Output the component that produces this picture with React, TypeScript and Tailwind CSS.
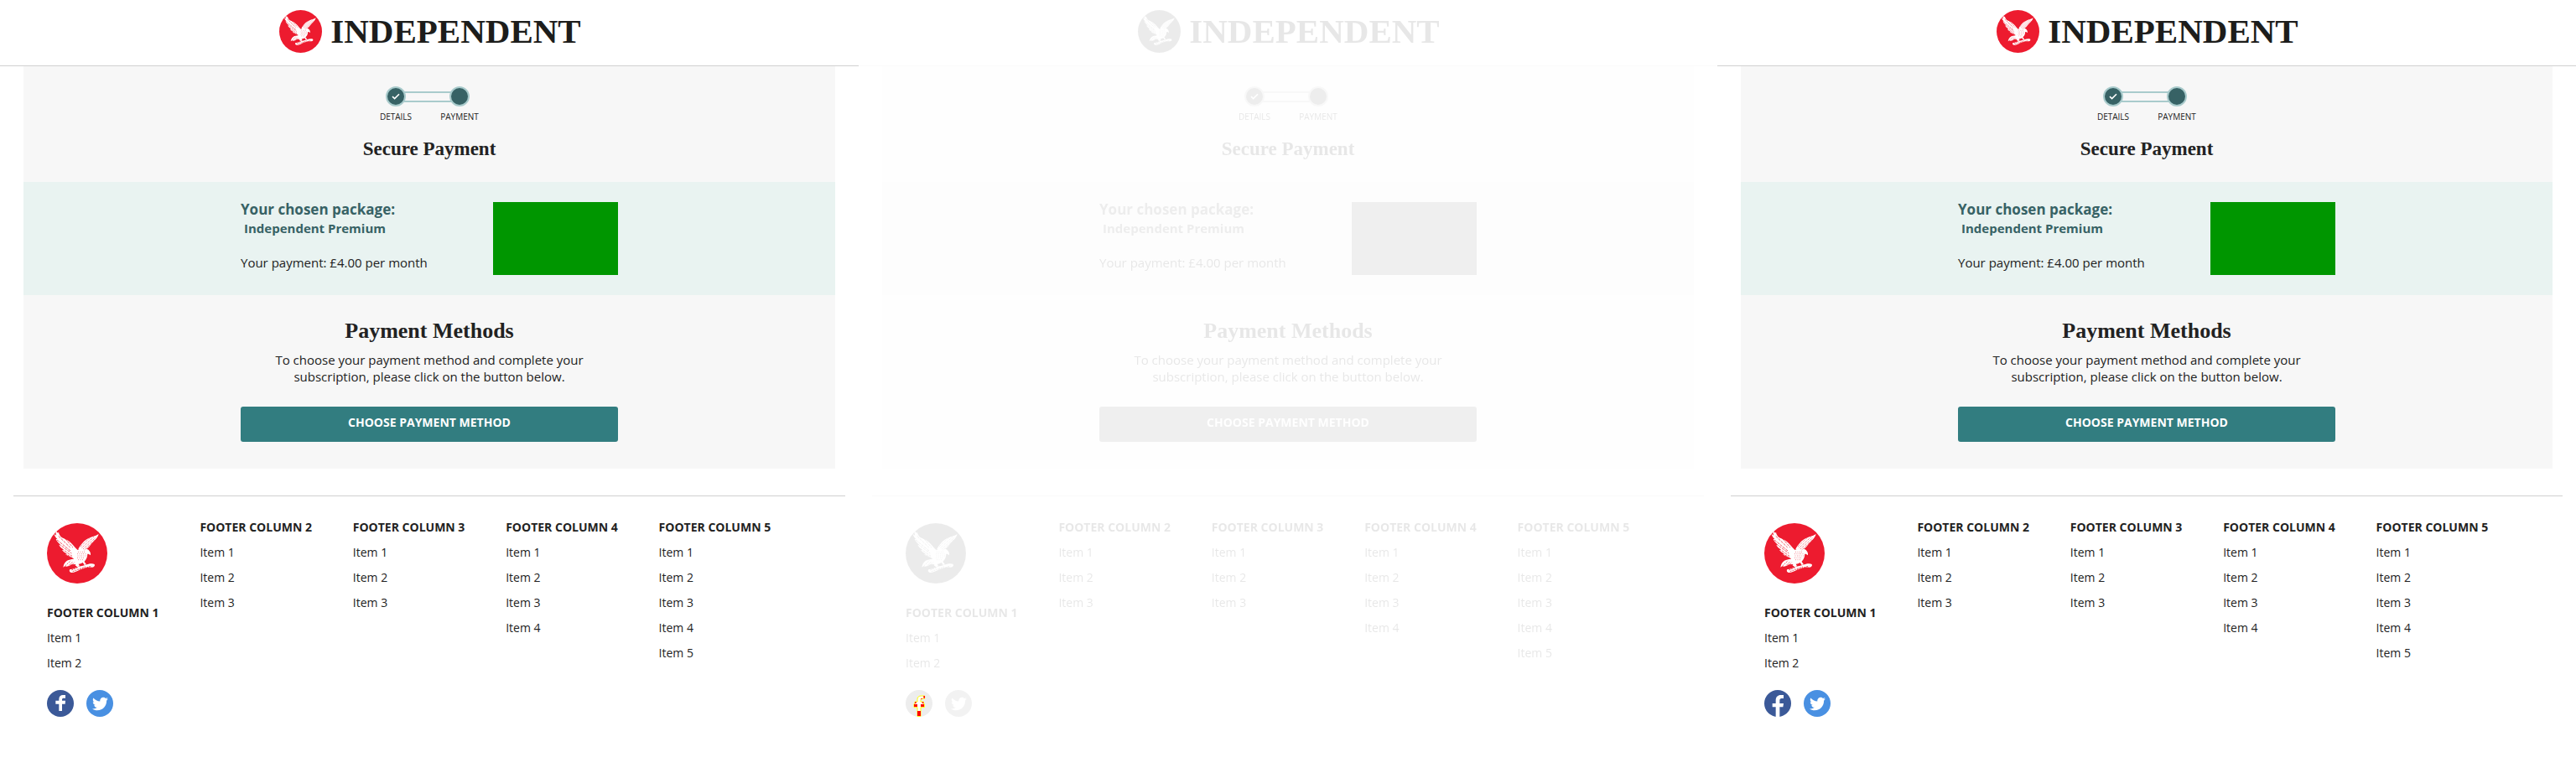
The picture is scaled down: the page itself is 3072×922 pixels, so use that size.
import { FaTwitter } from "react-icons/fa";

type FacebookStyle = "inset" | "compare" | "full";

const FADED = "grayscale opacity-10";

const COLUMNS = [
  { title: "FOOTER COLUMN 2", items: ["Item 1", "Item 2", "Item 3"] },
  { title: "FOOTER COLUMN 3", items: ["Item 1", "Item 2", "Item 3"] },
  { title: "FOOTER COLUMN 4", items: ["Item 1", "Item 2", "Item 3", "Item 4"] },
  { title: "FOOTER COLUMN 5", items: ["Item 1", "Item 2", "Item 3", "Item 4", "Item 5"] },
];

function EagleLogo({ className }: { className: string }) {
  return (
    <svg viewBox="0 0 216 216" className={className} aria-hidden="true">
      <circle cx="108" cy="108" r="108" fill="#ed1b2f" />
      <g fill="#fff">
        <path d="M42 32c1 8 5 14 12 20 14 6 25 11 34 21 9 9 15 19 24 25l-3 33c-9-2-15-6-22-9-7-3-14-6-21-11l5-1c-7-4-13-9-17-14l5-1c-7-6-13-11-16-18l5 0c-8-7-13-13-16-20l5 0c-6-6-10-12-11-18l8 5c-3-6-3-11-2-16l7 7z" />
        <path d="M112 93c4-9 11-18 20-28 10-8 20-13 32-17 8-2 15-5 21-9-2 8-7 15-13 21-6 7-13 13-18 20-6 7-11 12-18 15z" />
        <path d="M104 100c8-7 18-10 29-9 8 0 15 2 19 9 3 4 5 8 4 15-3-3-6-5-11-5 0 13-6 25-18 32-6 3-12 5-18 5l-22 1c-7 7-15 9-23 6l-6 4c2-12 6-19 14-24 7-4 15-5 23-6z" />
        <path d="M109 138l8 16-8 3-8-6zM125 136l9 14 7-2-10-14z" />
        <path d="M83 165c10 1 17-4 27-8 10-3 21-4 33-9 8-3 20-5 27-1 3 5-1 10-8 11-9 0-14-1-22 2-11 3-18 6-26 9-10 4-17 9-27 8-6-2-9-7-4-12z" />
      </g>
      <g stroke="#ed1b2f" strokeWidth="2.2" fill="none">
        <path d="M41 46l42 41M36 60l48 39M42 74l46 34M56 45l37 42M52 91l38 27M63 107l26 16" strokeDasharray="10 3" />
        <path d="M120 84l42-40M125 88l44-40M130 92l44-40M134 96l38-36M117 78l30-28" strokeDasharray="3 3" />
        <path d="M112 103h28M109 110h32M110 117h30M109 124h28M112 131h20" strokeDasharray="2 5" />
        <path d="M65 153l20-19M74 156l18-18M85 155l13-15M92 173l46-17M88 168l22-9M116 167l44-14" strokeDasharray="6 3" />
      </g>
    </svg>
  );
}

function FacebookIcon({ variant }: { variant: FacebookStyle }) {
  if (variant === "compare") {
    return (
      <svg viewBox="0 0 96 96" className="size-8" aria-hidden="true">
        <circle cx="48" cy="48" r="48" fill="#ededed" />
        <path
          d="M42 94V62H30V50h3V42h9V34C42 24 48 21 56 21h12v10h-9c-3 0-5 2-5 6v5h10v8h3v12H54v32z"
          fill="#fff"
          stroke="#ff0"
          strokeWidth="3"
        />
        <path d="M30 51h12v9H30zM54 51h12v9H54zM42 75h12v18H42zM64 21h5v8h-5zM33 43h5v5h-5zM59 43h5v5h-5zM55 30h4v3h-4z" fill="#f00" />
      </svg>
    );
  }
  return (
    <svg viewBox="0 0 96 96" className="size-8" aria-hidden="true">
      <circle cx="48" cy="48" r="48" fill="#3b5998" />
      {variant === "inset" ? (
        <path d="M43 75V50H31V38h12v-5c0-10 6-15 14-15h9v11h-6c-4 0-6 2-6 5v4h12l-1 12H54v25z" fill="#fff" />
      ) : (
        <path d="M41 96V61H29V48h12V37c0-12 7-19 18-19h10v12h-7c-5 0-7 3-7 7v11h14l-2 13H55v35z" fill="#fff" />
      )}
    </svg>
  );
}

function StepDot({ done }: { done?: boolean }) {
  return (
    <span className="z-10 flex size-6 items-center justify-center rounded-full border-2 border-[#a9cbcc] bg-[#376265]">
      {done && (
        <svg viewBox="0 0 10 8" className="h-2 w-2.5" aria-hidden="true">
          <path d="M1 4.2 3.6 6.6 9 1.2" fill="none" stroke="#fff" strokeWidth="1.6" />
        </svg>
      )}
    </span>
  );
}

function FooterList({ title, items }: { title: string; items: string[] }) {
  return (
    <div className="text-sm leading-[30px]">
      <h3 className="font-bold">{title}</h3>
      <ul className="font-medium">
        {items.map((item) => (
          <li key={item}>
            <a href="#">{item}</a>
          </li>
        ))}
      </ul>
    </div>
  );
}

function CheckoutPage({ facebook }: { facebook: FacebookStyle }) {
  const fade = facebook === "compare" ? FADED : "";
  return (
    <div className="min-w-0 flex-1">
      <header className={`flex h-[79px] items-start justify-center border-b border-[#d0d0d0] pt-3 ${fade}`}>
        <a href="#" className="flex items-center gap-2.5 pl-0.5">
          <EagleLogo className="size-[51px]" />
          <span className="font-['Liberation_Serif',serif] text-[41px] leading-none font-bold text-[#1d1d1b]">
            INDEPENDENT
          </span>
        </a>
      </header>

      <main className={`mx-7 bg-[#f7f7f7] ${fade}`}>
        <section className="flex flex-col items-center py-6">
          <div className="flex flex-col items-center pr-1">
            <div className="flex items-center">
              <StepDot done />
              <span className="-mx-1 h-[13px] w-[60px] border-y-2 border-[#a9cbcc]" />
              <StepDot />
            </div>
            <ol className="mt-1 grid w-[152px] grid-cols-2 text-center text-[10px] leading-4">
              <li>DETAILS</li>
              <li>PAYMENT</li>
            </ol>
          </div>
          <h1 className="mt-4 font-['Liberation_Serif',serif] text-[23px] leading-[30px] font-bold">Secure Payment</h1>
        </section>

        <section className="bg-[#e9f3f1] py-6">
          <div className="mx-auto flex w-[450px] justify-between text-[15px] font-medium">
            <div>
              <h2 className="text-[17px] leading-[18px] font-bold text-[#376265]">Your chosen package:</h2>
              <p className="mt-0.5 pl-1 leading-[22px] font-bold text-[#376265]">Independent Premium</p>
              <p className="mt-5 leading-5">Your payment: £4.00 per month</p>
            </div>
            <div className="h-[87px] w-[149px] bg-[#009600]" />
          </div>
        </section>

        <section className="mx-auto w-[450px] pt-6 pb-8 text-center">
          <h2 className="font-['Liberation_Serif',serif] text-[26px] leading-[38px] font-bold">Payment Methods</h2>
          <p className="mx-auto mt-[5px] w-[380px] text-[15px] leading-5 font-medium">
            To choose your payment method and complete your subscription, please click on the button below.
          </p>
          <button type="button" className="mt-[26px] h-[42px] w-full rounded-[3px] bg-[#327d80] pb-1 text-sm font-bold text-white">
            CHOOSE PAYMENT METHOD
          </button>
        </section>
      </main>

      <footer className="mx-4 mt-8">
        <hr className={`border-t border-[#d0d0d0] ${fade}`} />
        <div className="grid grid-cols-5 px-10 pt-[22px]">
          <div>
            <div className={fade}>
              <EagleLogo className="mt-2.5 mb-5 size-[72px]" />
              <FooterList title="FOOTER COLUMN 1" items={["Item 1", "Item 2"]} />
            </div>
            <div className="mt-[17px] flex gap-[15px]">
              <a href="#" aria-label="Facebook">
                <FacebookIcon variant={facebook} />
              </a>
              <a
                href="#"
                aria-label="Twitter"
                className={`flex size-8 items-center justify-center rounded-full bg-[#4990e2] text-white ${fade}`}
              >
                <FaTwitter size={19} />
              </a>
            </div>
          </div>
          {COLUMNS.map((column) => (
            <div key={column.title} className={fade}>
              <FooterList title={column.title} items={column.items} />
            </div>
          ))}
        </div>
      </footer>
    </div>
  );
}

export default function App() {
  return (
    <div className="flex bg-white pb-10 font-['Open_Sans','Noto_Sans',sans-serif] text-[#222]">
      <CheckoutPage facebook="inset" />
      <CheckoutPage facebook="compare" />
      <CheckoutPage facebook="full" />
    </div>
  );
}
